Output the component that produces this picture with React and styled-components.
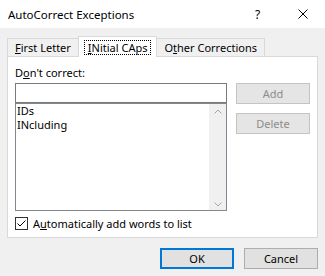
import React from "react";
import styled, { createGlobalStyle } from "styled-components";

const Global = createGlobalStyle`
    body {
        margin: 0;
        background: #f0f0f0;
        font-family: "Noto Sans", "Open Sans", sans-serif;
        font-size: 11px;
        color: #000;
    }
`;

const Dialog = styled.div`
    width: 325px;
    height: 276px;
    display: flex;
    flex-direction: column;
    background: #f0f0f0;
    overflow: hidden;
`;

const TitleBar = styled.div`
    height: 28px;
    display: flex;
    align-items: center;
    background: #fff;
    padding-left: 8px;
`;

const Title = styled.div`
    flex: 1;
    font-size: 11.5px;
    line-height: 15px;
`;

const TitleButton = styled.div`
    width: 45px;
    height: 28px;
    display: flex;
    align-items: center;
    justify-content: center;
    font-size: 12px;
`;

const Body = styled.div`
    padding: 8px 7px 0 7px;
`;

const TabRow = styled.div`
    height: 20px;
    display: flex;
    align-items: flex-end;
`;

const Tab = styled.div`
    position: relative;
    box-sizing: border-box;
    height: ${(p) => (p.$active ? "21px" : "18px")};
    margin-bottom: ${(p) => (p.$active ? "-1px" : "0")};
    padding: 0 ${(p) => (p.$active ? "6px" : "7px")};
    display: flex;
    align-items: center;
    background: ${(p) => (p.$active ? "#fff" : "#f0f0f0")};
    border: 1px solid #d9d9d9;
    border-bottom: none;
    margin-left: ${(p) => (p.$first ? "0" : "-1px")};
    z-index: ${(p) => (p.$active ? 1 : 0)};
    line-height: 15px;
`;

const Focus = styled.span`
    outline: 1px dotted #000;
    padding: 0 3px;
    line-height: 13px;
`;

const Panel = styled.div`
    box-sizing: border-box;
    height: 182px;
    background: #fff;
    border: 1px solid #d9d9d9;
    padding: 8px 7px 0 7px;
`;

const PanelGrid = styled.div`
    display: grid;
    grid-template-columns: 212px 74px;
    column-gap: 9px;
`;

const Column = styled.div`
    display: flex;
    flex-direction: column;
    padding-top: ${(p) => p.$offset || 0}px;
`;

const Label = styled.div`
    line-height: 15px;
    margin-bottom: 3px;
`;

const Input = styled.div`
    box-sizing: border-box;
    height: 20px;
    border: 1px solid #7a7a7a;
    background: #fff;
`;

const ListBox = styled.div`
    box-sizing: border-box;
    height: 108px;
    border: 1px solid #828790;
    display: flex;
    background: #fff;
`;

const Items = styled.div`
    flex: 1;
    padding: 0 0 0 1px;
`;

const Item = styled.div`
    line-height: 14px;
`;

const ScrollBar = styled.div`
    width: 17px;
    background: #f0f0f0;
    display: flex;
    flex-direction: column;
    justify-content: space-between;
    align-items: center;
    padding: 5px 0 3px;
`;

const Button = styled.div`
    box-sizing: border-box;
    height: 21px;
    width: 74px;
    display: flex;
    align-items: center;
    justify-content: center;
    background: ${(p) => (p.$disabled ? "#e5e5e5" : "#e1e1e1")};
    color: ${(p) => (p.$disabled ? "#8c8c8c" : "#000")};
    border: ${(p) => (p.$default ? "2px solid #0078d7" : p.$disabled ? "1px solid #c4c4c4" : "1px solid #adadad")};
    margin-top: ${(p) => p.$gap || 0}px;
`;

const CheckRow = styled.div`
    display: flex;
    align-items: center;
    gap: 5px;
    margin-top: 5px;
    line-height: 15px;
`;

const CheckBox = styled.div`
    box-sizing: border-box;
    width: 13px;
    height: 13px;
    border: 1px solid #333;
    background: #fff;
    display: flex;
    align-items: center;
    justify-content: center;
`;

const Footer = styled.div`
    display: flex;
    justify-content: flex-end;
    gap: 10px;
    margin-top: 10px;
`;

const Chevron = ({ down }) => (
    <svg width="8" height="5" viewBox="0 0 8 5">
        <polyline
            points={down ? "0.5,0.5 4,4 7.5,0.5" : "0.5,4.5 4,1 7.5,4.5"}
            fill="none"
            stroke="#a6a6a6"
            strokeWidth="1"
        />
    </svg>
);

export default function App() {
    return (
        <Dialog>
            <Global />
            <TitleBar>
                <Title>AutoCorrect Exceptions</Title>
                <TitleButton>?</TitleButton>
                <TitleButton>
                    <svg width="10" height="10" viewBox="0 0 10 10">
                        <path d="M0.5 0.5 L9.5 9.5 M9.5 0.5 L0.5 9.5" stroke="#000" strokeWidth="1" />
                    </svg>
                </TitleButton>
            </TitleBar>
            <Body>
                <TabRow>
                    <Tab $first>
                        <span>
                            <u>F</u>irst Letter
                        </span>
                    </Tab>
                    <Tab $active>
                        <Focus>
                            <u>I</u>Nitial CAps
                        </Focus>
                    </Tab>
                    <Tab>
                        <span>
                            O<u>t</u>her Corrections
                        </span>
                    </Tab>
                </TabRow>
                <Panel>
                    <PanelGrid>
                        <Column>
                            <Label>
                                D<u>o</u>n't correct:
                            </Label>
                            <Input />
                            <ListBox>
                                <Items>
                                    <Item>IDs</Item>
                                    <Item>INcluding</Item>
                                </Items>
                                <ScrollBar>
                                    <Chevron />
                                    <Chevron down />
                                </ScrollBar>
                            </ListBox>
                        </Column>
                        <Column $offset={18}>
                            <Button $disabled>Add</Button>
                            <Button $disabled $gap={9}>
                                Delete
                            </Button>
                        </Column>
                    </PanelGrid>
                    <CheckRow>
                        <CheckBox>
                            <svg width="11" height="11" viewBox="0 0 11 11">
                                <polyline points="1.5,5.5 4,8 9.5,2.5" fill="none" stroke="#000" strokeWidth="1" />
                            </svg>
                        </CheckBox>
                        <span>
                            A<u>u</u>tomatically add words to list
                        </span>
                    </CheckRow>
                </Panel>
                <Footer>
                    <Button $default>OK</Button>
                    <Button>Cancel</Button>
                </Footer>
            </Body>
        </Dialog>
    );
}
